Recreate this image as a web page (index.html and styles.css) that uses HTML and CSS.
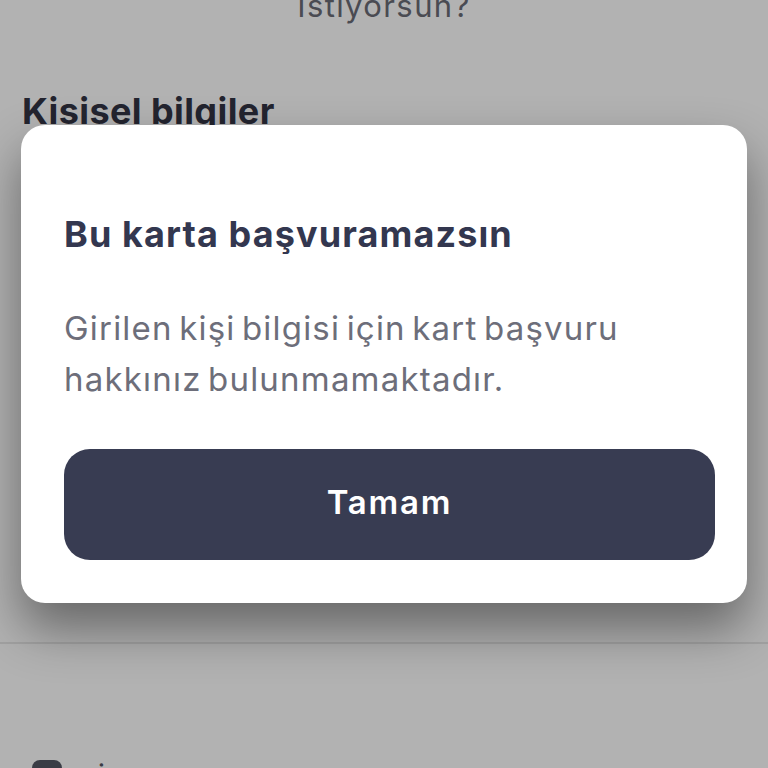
FILE: index.html
```html
<!DOCTYPE html>
<html lang="tr">
<head>
<meta charset="utf-8">
<title>Kart başvurusu</title>
<link rel="stylesheet" href="styles.css">
</head>
<body>
<main class="page">
  <p class="question">Istiyorsun?</p>
  <h2 class="section-title">Kisisel bilgiler</h2>
  <div class="spacer"></div>
  <hr class="divider">
  <div class="footer-row">
    <span class="footer-icon"></span>
    <span class="footer-text">i</span>
  </div>
</main>
<section class="dialog">
  <h1 class="dialog-title">Bu karta başvuramazsın</h1>
  <p class="dialog-text">Girilen kişi bilgisi için kart başvuru hakkınız bulunmamaktadır.</p>
  <button class="dialog-button">Tamam</button>
</section>
</body>
</html>
```
FILE: styles.css
```css
* { box-sizing: border-box; }
html, body { margin: 0; height: 768px; overflow: hidden; }
body {
  position: relative;
  background: #b2b2b2;
  font-family: "Inter", "Lato", sans-serif;
}
.page {
  height: 768px;
  display: flex;
  flex-direction: column;
  overflow: hidden;
}
.question {
  margin: -14px 0 0;
  text-align: center;
  font-size: 31px;
  line-height: 40px;
  letter-spacing: 1.4px;
  color: #4a4b52;
}
.section-title {
  margin: 64px 0 0 22px;
  font-size: 36px;
  line-height: 42px;
  font-weight: 700;
  letter-spacing: 0.4px;
  color: #23242f;
}
.spacer { flex: 1; }
.divider {
  width: 100%;
  margin: 0;
  border: 0;
  border-top: 2px solid rgba(0, 0, 0, 0.09);
}
.footer-row {
  height: 124px;
  padding: 116px 0 0 32px;
  display: flex;
  gap: 36px;
}
.footer-icon {
  width: 30px;
  height: 30px;
  border-radius: 8px;
  background: #3a3c45;
  flex: none;
}
.footer-text { font-size: 28px; line-height: 30px; color: #3a3c45; }
.dialog {
  position: absolute;
  left: 21px;
  top: 125px;
  width: 726px;
  height: 478px;
  padding: 84px 32px 43px 43px;
  display: flex;
  flex-direction: column;
  background: #fff;
  border-radius: 24px;
  box-shadow: 0 26px 50px rgba(0, 0, 0, 0.42);
}
.dialog-title {
  margin: 0;
  font-size: 36px;
  line-height: 50px;
  font-weight: 700;
  letter-spacing: 1.1px;
  color: #33374f;
}
.dialog-text {
  margin: 44px 0 0;
  font-size: 33px;
  line-height: 51px;
  letter-spacing: 1.2px;
  word-spacing: -4px;
  color: #6d6e7a;
}
.dialog-button {
  margin-top: auto;
  width: 100%;
  height: 111px;
  padding: 0 0 5px;
  border: 0;
  border-radius: 26px;
  background: #383c52;
  color: #fff;
  font-family: inherit;
  font-size: 33px;
  font-weight: 600;
  letter-spacing: 1.8px;
}
```
